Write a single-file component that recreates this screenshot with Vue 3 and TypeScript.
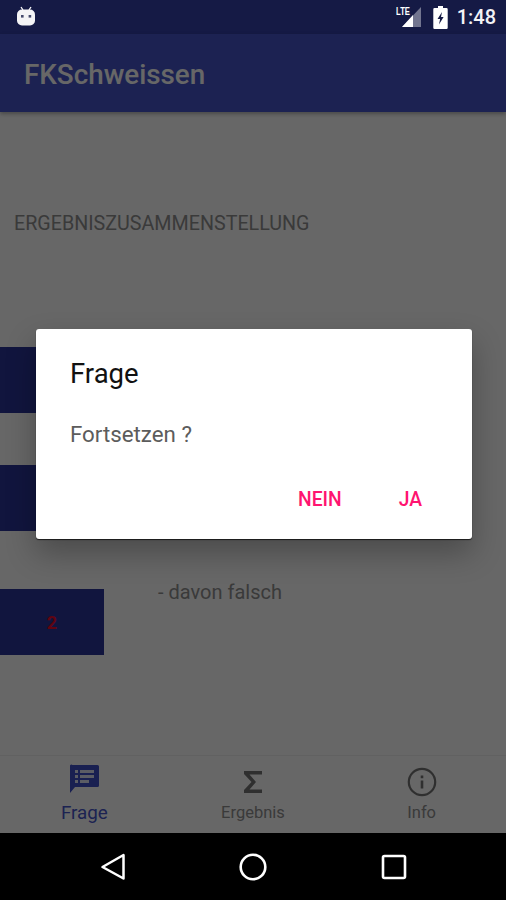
<script setup lang="ts">
const rows = [
  { id: 1, value: '', label: '' },
  { id: 2, value: '', label: '' },
  { id: 3, value: '2', label: '- davon falsch' },
]

const tabs = ['Frage', 'Ergebnis', 'Info']
</script>

<template>
  <div class="screen">
    <div class="status">
      <svg class="robot" width="20" height="20" viewBox="0 0 20 20">
        <path d="M5 1l2 3M15 1l-2 3" stroke="#fff" stroke-width="1.3" fill="none" />
        <rect x="1" y="3.5" width="18" height="16" rx="5" fill="#f4f4f6" />
        <rect x="5" y="9" width="2.6" height="2.6" fill="#444a6c" />
        <rect x="12.6" y="9" width="2.6" height="2.6" fill="#444a6c" />
      </svg>
      <div class="status-right">
        <svg width="26" height="24" viewBox="0 0 26 24">
          <path d="M25 2V22H6Z" fill="#fff" opacity="0.4" />
          <path d="M17 10V22H6Z" fill="#fff" />
          <rect x="0" y="0" width="15" height="11" fill="#151a45" />
          <text x="0" y="10" class="lte" textLength="14" lengthAdjust="spacingAndGlyphs">LTE</text>
        </svg>
        <svg class="battery" width="15" height="23" viewBox="0 0 15 23">
          <path d="M5 0h5v2h3.500a1.200 1.200 0 0 1 1.200 1.200v18.600a1.200 1.200 0 0 1-1.200 1.200H1.500a1.200 1.200 0 0 1-1.200-1.200V3.200A1.200 1.200 0 0 1 1.500 2H5Z" fill="#fff" />
          <path d="M9 6L4.500 13h2.600L6 18.500l4.600-7.500H8Z" fill="#151a45" />
        </svg>
        <span class="time">1:48</span>
      </div>
    </div>

    <div class="app">
      <header class="bar">FKSchweissen</header>

      <main class="content">
        <h2 class="heading">ERGEBNISZUSAMMENSTELLUNG</h2>
        <div class="rows">
          <div v-for="row in rows" :key="row.id" class="row">
            <div class="block">{{ row.value }}</div>
            <div class="label">{{ row.label }}</div>
          </div>
        </div>
      </main>

      <nav class="tabs">
        <div v-for="(tab, i) in tabs" :key="tab" class="tab" :class="{ active: i === 0 }">
          <svg v-if="i === 0" class="tab-icon" width="30" height="30" viewBox="0 0 30 30">
            <g transform="translate(0 -3)">
              <path d="M3.500 1h25A1.500 1.500 0 0 1 30 2.500v19a1.500 1.500 0 0 1-1.500 1.500H6L1 29V2.500A1.500 1.500 0 0 1 3.500 1Z" fill="#3f4fc8" />
              <path d="M6 6h3v3H6ZM6 11h3v3H6ZM6 16h3v3H6ZM11 6h14v3H11ZM11 11h14v3H11ZM11 16h9v3h-9Z" fill="#fff" opacity="0.85" />
            </g>
          </svg>
          <svg v-else-if="i === 1" class="tab-icon" width="30" height="30" viewBox="0 0 30 30">
            <path d="M6 4h18v3.500H11.500l6.500 7.500-6.500 7.500H24V26H6v-3l7.500-8L6 7Z" fill="#757575" />
          </svg>
          <svg v-else class="tab-icon" width="30" height="30" viewBox="0 0 30 30">
            <circle cx="15" cy="15" r="13.200" fill="none" stroke="#757575" stroke-width="2.200" />
            <path d="M13.700 13.500h2.600v8h-2.600ZM13.700 8.500h2.600v2.700h-2.600Z" fill="#757575" />
          </svg>
          <span class="tab-label">{{ tab }}</span>
        </div>
      </nav>

      <div class="scrim"></div>

      <section class="dialog">
        <h3 class="dialog-title">Frage</h3>
        <p class="dialog-text">Fortsetzen ?</p>
        <div class="dialog-actions">
          <button class="action">NEIN</button>
          <button class="action">JA</button>
        </div>
      </section>
    </div>

    <div class="system">
      <svg width="26" height="28" viewBox="0 0 26 28">
        <path d="M23.500 2V25.500L2.500 14Z" fill="none" stroke="#fff" stroke-width="2.500" stroke-linejoin="round" />
      </svg>
      <svg width="28" height="28" viewBox="0 0 28 28">
        <circle cx="14" cy="14" r="12.300" fill="none" stroke="#fff" stroke-width="2.600" />
      </svg>
      <svg width="27" height="26" viewBox="0 0 27 26">
        <rect x="3" y="2" width="22" height="22" rx="1.500" fill="none" stroke="#fff" stroke-width="2.600" />
      </svg>
    </div>
  </div>
</template>

<style scoped>
.screen {
  display: flex;
  flex-direction: column;
  width: 506px;
  height: 900px;
  overflow: hidden;
  font-family: Roboto, "Liberation Sans", sans-serif;
}

.status {
  flex: 0 0 34px;
  display: flex;
  align-items: center;
  justify-content: space-between;
  padding: 0 10px 0 16px;
  background: #151a45;
}

.robot {
  margin-top: -2px;
}

.status-right {
  display: flex;
  align-items: center;
}

.lte {
  font: 700 10px "Liberation Sans", sans-serif;
  fill: #fff;
}

.battery {
  margin-left: 11px;
}

.time {
  margin-left: 9px;
  color: #f2f2f5;
  font-size: 20px;
  font-weight: 500;
}

.app {
  position: relative;
  flex: 1;
  display: flex;
  flex-direction: column;
  min-height: 0;
  background: #fff;
}

.bar {
  flex: 0 0 78px;
  display: flex;
  align-items: center;
  padding: 2px 0 0 24px;
  box-sizing: border-box;
  background: #4655ca;
  color: #fff;
  font-size: 27.800px;
  font-weight: 500;
  box-shadow: 0 2px 4px rgba(0, 0, 0, 0.3);
  z-index: 1;
}

.content {
  flex: 1;
  min-height: 0;
}

.heading {
  margin: 0;
  padding: 100px 0 0 14px;
  color: #909090;
  font-size: 19.700px;
  font-weight: 400;
  line-height: 24px;
}

.rows {
  display: flex;
  flex-direction: column;
  gap: 52px;
  padding-top: 111px;
}

.row {
  display: flex;
  gap: 54px;
}

.row:last-child {
  margin-top: 6px;
}

.block {
  flex: 0 0 104px;
  height: 66px;
  display: flex;
  align-items: center;
  justify-content: center;
  background: #2b3599;
  color: #f00a2a;
  font-size: 18px;
  font-weight: 700;
}

.label {
  margin-top: -9px;
  color: #909090;
  font-size: 20px;
  line-height: 24px;
}

.tabs {
  flex: 0 0 78px;
  display: grid;
  grid-template-columns: repeat(3, 1fr);
  border-top: 1px solid #f0f0f0;
  box-sizing: border-box;
}

.tab {
  display: flex;
  flex-direction: column;
  align-items: center;
  padding-top: 11px;
  color: #909090;
}

.tab.active {
  color: #4655ca;
}

.tab-icon {
  overflow: visible;
}

.tab-label {
  margin-top: 5px;
  font-size: 16.500px;
  line-height: 22px;
}

.tab.active .tab-label {
  font-size: 18.800px;
}

.scrim {
  position: absolute;
  inset: 0;
  z-index: 2;
  background: rgba(0, 0, 0, 0.595);
}

.dialog {
  position: absolute;
  z-index: 3;
  left: 36px;
  top: 295px;
  width: 436px;
  height: 210px;
  box-sizing: border-box;
  padding: 28px 34px 0;
  display: flex;
  flex-direction: column;
  background: #fff;
  border-radius: 3px;
  box-shadow: 0 1px 1px rgba(0, 0, 0, 0.7), 0 14px 30px rgba(0, 0, 0, 0.28);
}

.dialog-title {
  margin: 0;
  color: #111;
  font-size: 27.500px;
  font-weight: 400;
  line-height: 34px;
}

.dialog-text {
  margin: 29px 0 0;
  color: #5c5c5c;
  font-size: 22.300px;
  line-height: 28px;
}

.dialog-actions {
  margin: 40px 16px 0 0;
  display: flex;
  justify-content: flex-end;
  gap: 57px;
}

.action {
  padding: 0;
  border: 0;
  background: none;
  color: #ff1470;
  font-family: inherit;
  font-size: 19.300px;
  font-weight: 500;
  line-height: 24px;
}

.system {
  flex: 0 0 67px;
  display: grid;
  grid-template-columns: 26px 28px 27px;
  justify-content: center;
  align-items: center;
  column-gap: 113px;
  background: #000;
}
</style>
